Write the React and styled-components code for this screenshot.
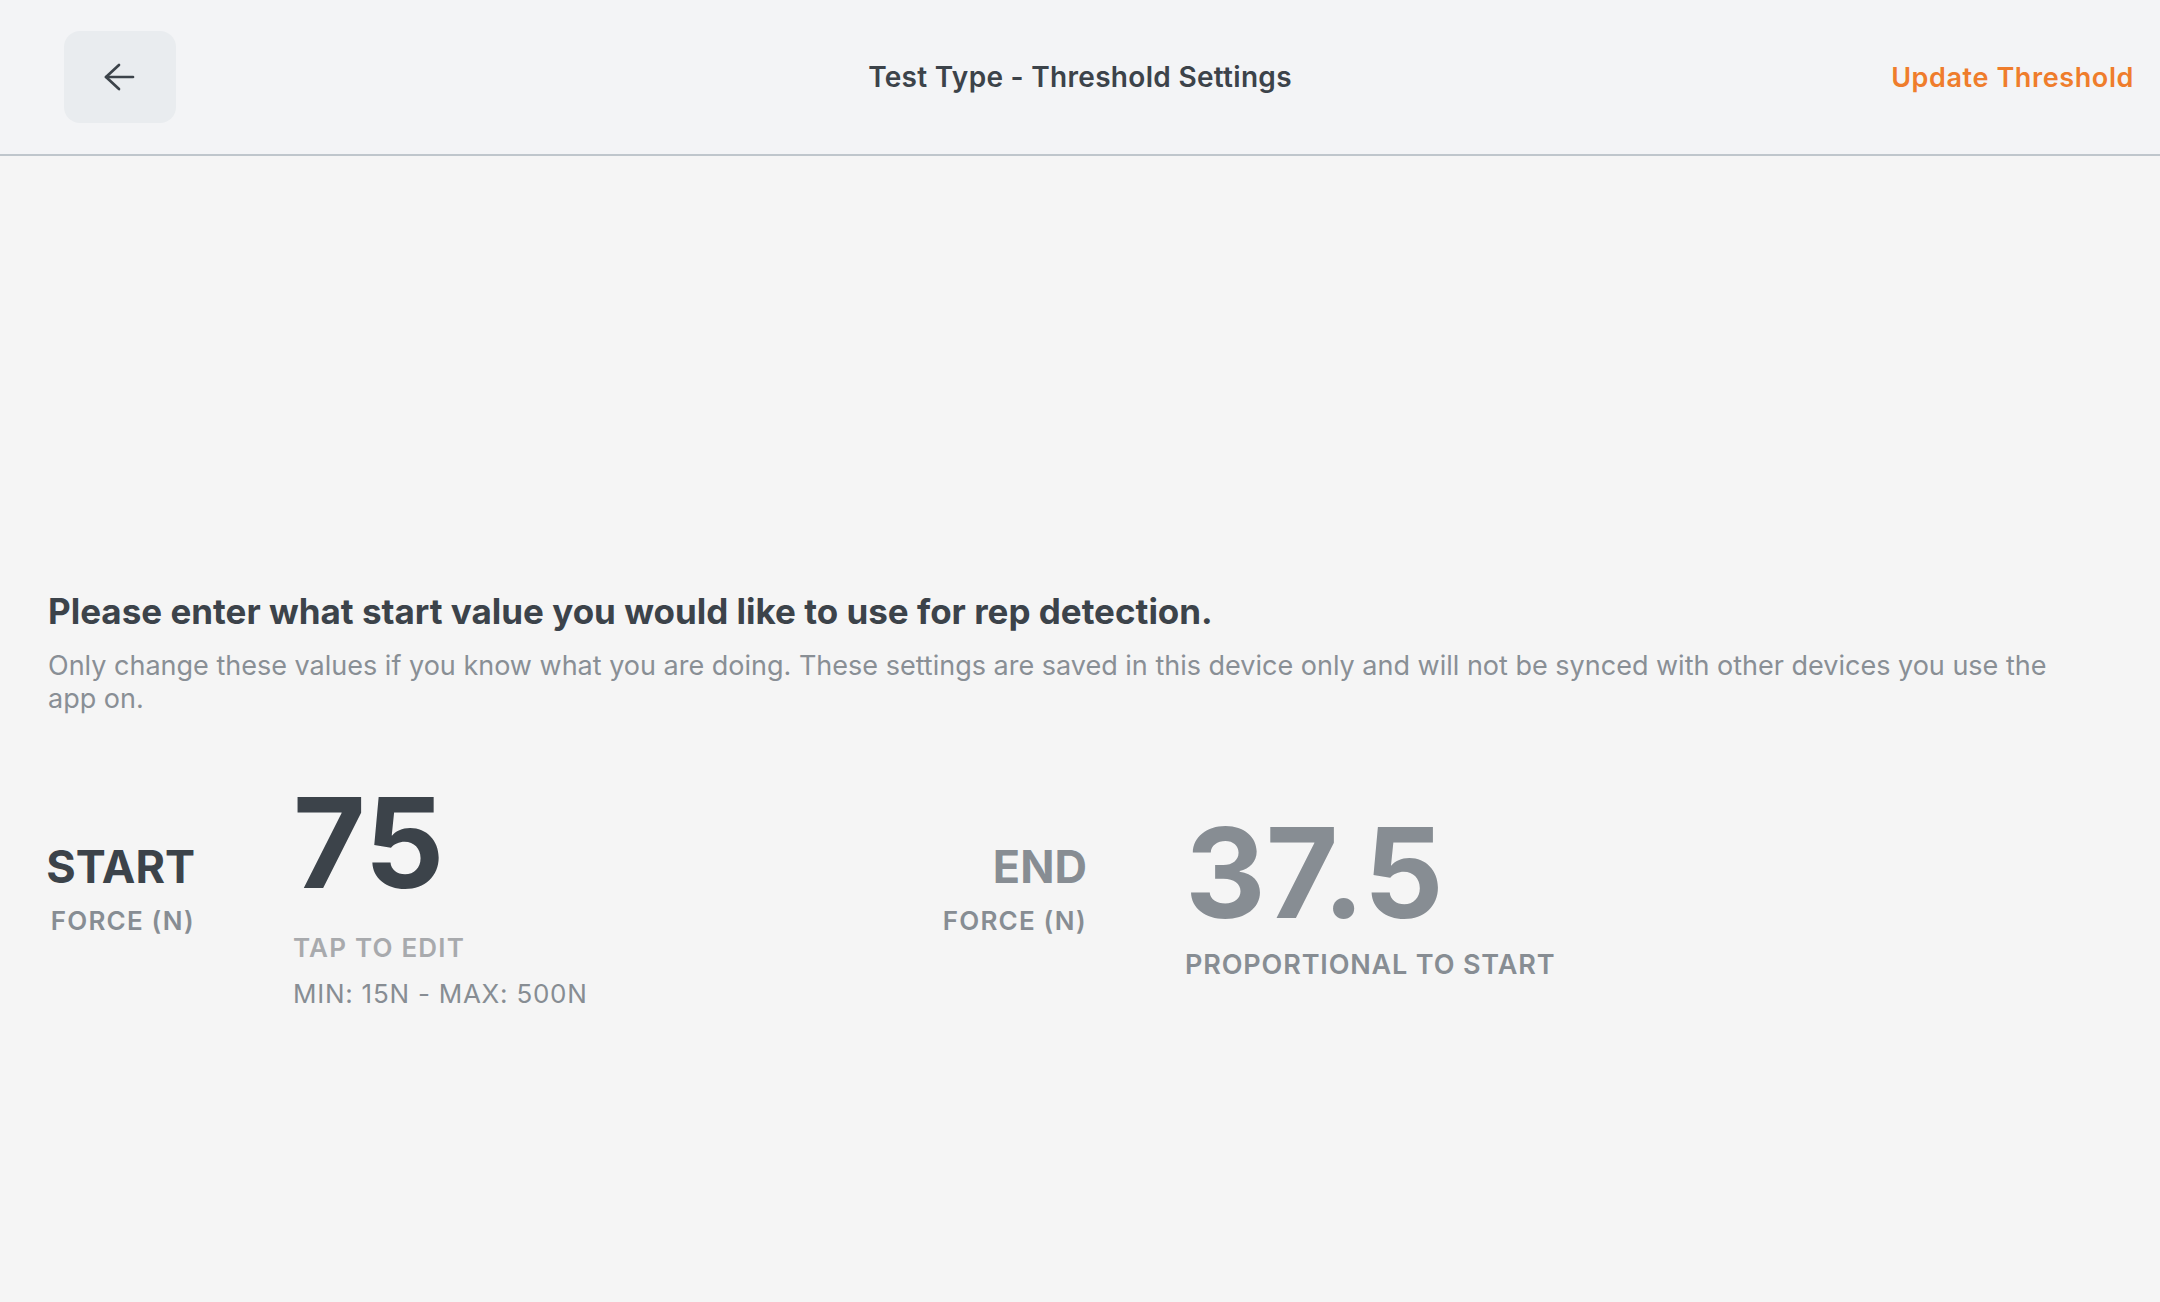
import React from "react";
import styled, { createGlobalStyle } from "styled-components";

const Global = createGlobalStyle`
  html, body { margin: 0; padding: 0; background: #f5f5f5; }
  body { font-family: Inter, "Open Sans", Roboto, sans-serif; -webkit-font-smoothing: antialiased; }
  * { box-sizing: border-box; }
`;

const Page = styled.div`
  min-height: 1302px;
  background: #f5f5f5;
  display: flex;
  flex-direction: column;
`;

const Header = styled.header`
  height: 156px;
  background: #f3f4f6;
  border-bottom: 2px solid #bfc6cc;
  display: grid;
  grid-template-columns: 1fr auto 1fr;
  align-items: center;
  padding: 0 26px;
`;

const BackButton = styled.button`
  width: 112px;
  height: 92px;
  margin-left: 38px;
  border: none;
  border-radius: 16px;
  background: #e9ecef;
  display: flex;
  align-items: center;
  justify-content: center;
  color: #3c434a;
  padding: 0;
  cursor: pointer;
`;

const Title = styled.h1`
  margin: 0;
  font-size: 28px;
  font-weight: 600;
  color: #3c434a;
  letter-spacing: 0.3px;
`;

const Action = styled.button`
  justify-self: end;
  border: none;
  background: none;
  padding: 0;
  font-family: inherit;
  font-size: 27px;
  font-weight: 600;
  color: #ef7d2c;
  letter-spacing: 0.6px;
`;

const Main = styled.main`
  padding: 435px 50px 0 48px;
`;

const Heading = styled.h2`
  margin: 0;
  font-size: 35px;
  line-height: 40px;
  font-weight: 700;
  color: #3c434a;
  letter-spacing: 0;
`;

const Body = styled.p`
  margin: 18px 0 0 0;
  max-width: 2030px;
  font-size: 27px;
  line-height: 33px;
  font-weight: 400;
  color: #898f95;
`;

const Stats = styled.div`
  margin-top: 65px;
  display: grid;
  grid-template-columns: 892px 1fr;
`;

const Group = styled.div`
  display: flex;
  align-items: center;
  gap: 98px;
`;

const LabelCol = styled.div`
  width: 147px;
  display: flex;
  flex-direction: column;
  align-items: flex-end;
  padding-bottom: 13px;
`;

const Label = styled.div`
  font-size: 45px;
  line-height: 54px;
  font-weight: 700;
  color: ${(p) => (p.$muted ? "#878d93" : "#3c434a")};
  letter-spacing: 0;
`;

const Unit = styled.div`
  margin-top: 11px;
  font-size: 26px;
  line-height: 32px;
  font-weight: 600;
  color: #878d93;
  letter-spacing: 1.2px;
`;

const ValueCol = styled.div`
  display: flex;
  flex-direction: column;
  align-items: flex-start;
`;

const Value = styled.div`
  font-size: 125px;
  line-height: 125px;
  font-weight: 700;
  color: ${(p) => (p.$muted ? "#878d93" : "#3c434a")};
  letter-spacing: 0;
`;

const Hint = styled.div`
  margin-top: ${(p) => p.$gap}px;
  font-size: ${(p) => p.$size || 26}px;
  line-height: 32px;
  font-weight: ${(p) => p.$weight || 600};
  color: ${(p) => p.$color};
  letter-spacing: ${(p) => p.$track}px;
`;

const ArrowIcon = () => (
  <svg width="32" height="28" viewBox="0 0 32 28" fill="none" stroke="currentColor" strokeWidth="2.7" strokeLinecap="round" strokeLinejoin="round">
    <path d="M15 2 L2 14 L15 26" />
    <path d="M2 14 H29" />
  </svg>
);

export default function App() {
  return (
    <Page>
      <Global />
      <Header>
        <BackButton aria-label="Back">
          <ArrowIcon />
        </BackButton>
        <Title>Test Type - Threshold Settings</Title>
        <Action>Update Threshold</Action>
      </Header>
      <Main>
        <Heading>Please enter what start value you would like to use for rep detection.</Heading>
        <Body>
          Only change these values if you know what you are doing. These settings are saved in this device only and will not be synced with other devices you use the app on.
        </Body>
        <Stats>
          <Group>
            <LabelCol>
              <Label>START</Label>
              <Unit>FORCE (N)</Unit>
            </LabelCol>
            <ValueCol>
              <Value>75</Value>
              <Hint $gap={27} $track={1.2} $color="#a8aaad">TAP TO EDIT</Hint>
              <Hint $gap={14} $track={0.75} $weight={400} $color="#878d93">MIN: 15N - MAX: 500N</Hint>
            </ValueCol>
          </Group>
          <Group>
            <LabelCol>
              <Label $muted>END</Label>
              <Unit>FORCE (N)</Unit>
            </LabelCol>
            <ValueCol>
              <Value $muted>37.5</Value>
              <Hint $gap={14} $track={0.85} $size={27} $color="#878d93">PROPORTIONAL TO START</Hint>
            </ValueCol>
          </Group>
        </Stats>
      </Main>
    </Page>
  );
}
